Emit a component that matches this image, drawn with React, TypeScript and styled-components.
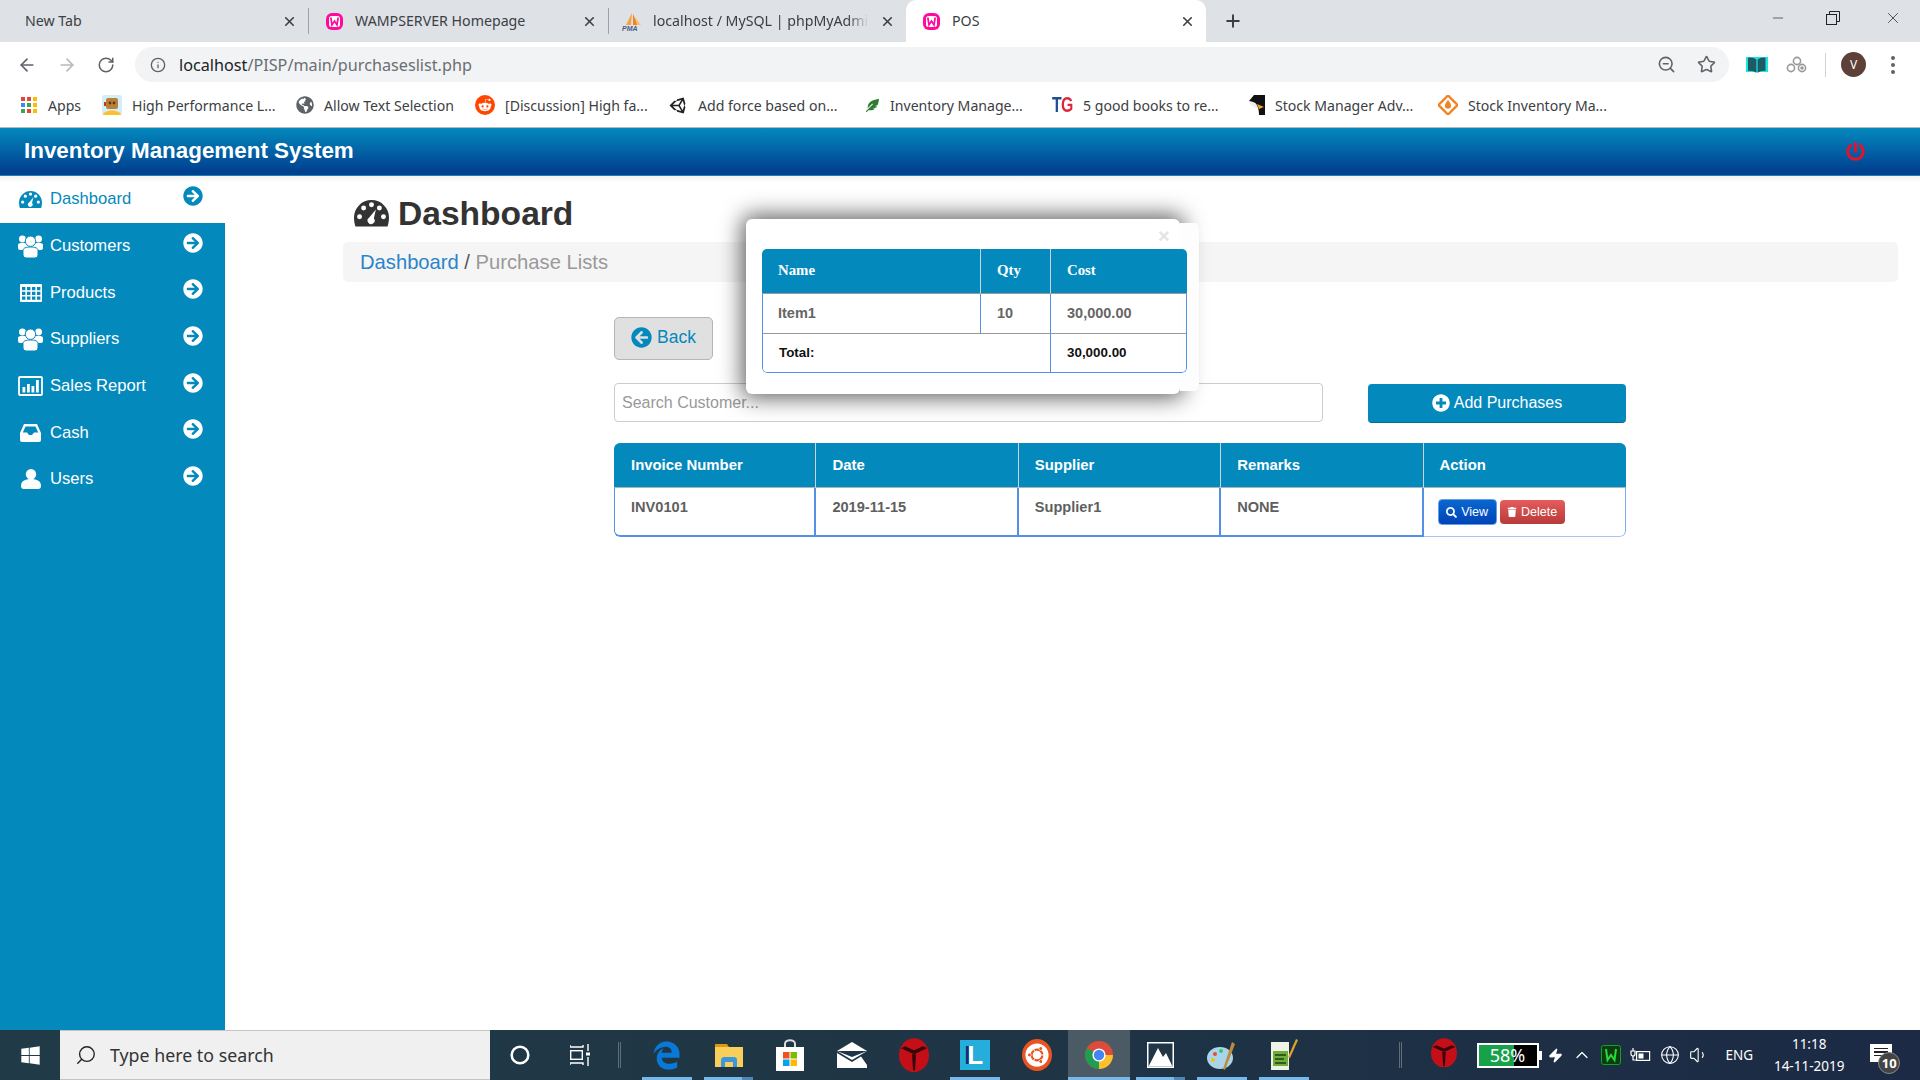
import React, { ReactElement, ReactNode } from 'react'
import styled, { createGlobalStyle } from 'styled-components'
import {
    FaArrowCircleRight, FaArrowCircleLeft, FaPlusCircle, FaSearch, FaTrash, FaPowerOff, FaWindows,
    FaEdgeLegacy, FaUbuntu, FaRedditAlien, FaUnity, FaGlobeAmericas, FaFeatherAlt
} from 'react-icons/fa'
import {
    ArrowLeft, ArrowRight, RotateCw, Info, ZoomOut, Star, X, Plus, Minus, Search,
    Circle, ChevronUp, Globe, Volume1, Zap
} from 'lucide-react'

const GlobalStyle = createGlobalStyle`
    html, body {
        margin: 0;
        padding: 0;
        background: #fff;
        font-family: "Liberation Sans", Arial, sans-serif;
    }
    * { box-sizing: border-box; }
`

const hole = (x : number, y : number, r : number) : string =>
    `M${x - r} ${y} a${r} ${r} 0 1 0 ${2 * r} 0 a${r} ${r} 0 1 0 ${-2 * r} 0 Z`

const DialIcon = ({ size } : { size : number }) : ReactElement => <svg width = { size } height = { size * .76 } viewBox = '0 0 24 18.2'>
    <path
        fill = 'currentColor'
        fillRule = 'evenodd'
        d = {
            'M12 0 A12 12 0 0 1 24 12 C24 14 23.6 16.4 23 18.2 H1 C.4 16.4 0 14 0 12 A12 12 0 0 1 12 0 Z '
            + hole(3.8, 11.5, 1.7) + hole(6.6, 5.4, 1.7) + hole(12, 3.2, 1.7) + hole(17.4, 5.4, 1.7) + hole(20.2, 11.5, 1.7)
            + 'M15 6.5 L13.6 12.6 A2.4 2.4 0 1 1 10.3 12.2 Z'
        }
    />
</svg>

const GroupIcon = () : ReactElement => <svg width = '25' height = '24' viewBox = '0 0 25 24' fill = 'currentColor'>
    <circle cx = '4.4' cy = '5' r = '3.4' />
    <circle cx = '20.6' cy = '5' r = '3.4' />
    <path d = 'M0 14 V11 C0 9.6 1.5 9 4 9 H21 C23.5 9 25 9.6 25 11 V14 Q25 16 23 16 H2 Q0 16 0 14 Z' />
    <circle cx = '12.5' cy = '7.2' r = '5.2' stroke = '#0489bd' strokeWidth = '1' />
    <path d = 'M5 21 V16.5 C5 14 8 13 12.5 13 C17 13 20 14 20 16.5 V21 Q20 24 17 24 H8 Q5 24 5 21 Z' stroke = '#0489bd' strokeWidth = '1' />
</svg>

const GridIcon = () : ReactElement => {
    const cells = [3, 7.8, 12.6].flatMap(y => [2, 7, 12, 17].map(x => `M${x} ${y} h3.4 v3.2 h-3.4 Z`)).join(' ')

    return <svg width = '22' height = '18' viewBox = '0 0 22 18'>
        <path fill = 'currentColor' fillRule = 'evenodd' d = { 'M1 0 H21 Q22 0 22 1 V17 Q22 18 21 18 H1 Q0 18 0 17 V1 Q0 0 1 0 Z ' + cells } />
    </svg>
}

const ChartIcon = () : ReactElement => <svg width = '25' height = '20' viewBox = '0 0 25 20'>
    <rect x = '1' y = '1' width = '23' height = '18' rx = '1' fill = 'none' stroke = 'currentColor' strokeWidth = '1.8' />
    <path d = 'M4.5 11 h2.8 v5.5 h-2.8 Z M9 8 h2.8 v8.5 h-2.8 Z M13.5 10 h2.8 v6.5 h-2.8 Z M18 4 h2.8 v12.5 h-2.8 Z' fill = 'currentColor' />
</svg>

const InboxIcon = () : ReactElement => <svg width = '21' height = '18' viewBox = '0 0 21 18'>
    <path
        fill = 'currentColor'
        fillRule = 'evenodd'
        d = 'M4 0 H17 L21 9 V16 Q21 18 19 18 H2 Q0 18 0 16 V9 Z M5.5 2.5 L2.8 8.5 H7 L9 11 H12 L14 8.5 H18.2 L15.5 2.5 Z'
    />
</svg>

const UserIcon = () : ReactElement => <svg width = '20' height = '20' viewBox = '0 0 20 20' fill = 'currentColor'>
    <circle cx = '10' cy = '5.2' r = '5.2' />
    <path d = 'M0 17 C0 12 4 10 10 10 C16 10 20 12 20 17 Q20 20 17 20 H3 Q0 20 0 17 Z' />
</svg>

const WampIcon = () : ReactElement => <svg width = '19' height = '19' viewBox = '0 0 19 19'>
    <rect x = '1' y = '1' width = '17' height = '17' rx = '6' fill = '#ff0a9c' />
    <rect x = '4' y = '4' width = '11' height = '11' rx = '2.5' fill = '#fff' />
    <path d = 'M5.8 5.5 L7 13 L9.5 9 L12 13 L13.2 5.5' fill = 'none' stroke = '#ff0a9c' strokeWidth = '1.7' />
</svg>

const PmaIcon = () : ReactElement => <svg width = '20' height = '19' viewBox = '0 0 20 19'>
    <path d = 'M10 1 L4 13 H9 Z' fill = '#f7a23b' />
    <path d = 'M11 2 L16 13 H11 Z' fill = '#f5821f' />
    <path d = 'M13 5 L19 13 H15 Z' fill = '#f9c06d' />
    <text x = '0' y = '18.5' fontSize = '7' fontWeight = '700' fontStyle = 'italic' fill = '#4a5a86' fontFamily = 'Liberation Sans'>PMA</text>
</svg>

const AppsIcon = () : ReactElement => <svg width = '16' height = '16' viewBox = '0 0 16 16'>
    {
        ['#ea4335', '#ea4335', '#fbbc05', '#4285f4', '#34a853', '#fbbc05', '#34a853', '#ea4335', '#fbbc05'].map((c, i) =>
            <rect key = { i } x = { (i % 3) * 6 } y = { Math.floor(i / 3) * 6 } width = '4' height = '4' fill = { c } />)
    }
</svg>

const RobotIcon = () : ReactElement => <svg width = '20' height = '20' viewBox = '0 0 20 20'>
    <rect width = '20' height = '20' rx = '2' fill = '#d4eef7' />
    <path d = 'M1 20 C2 14 18 14 19 20 Z' fill = '#fbc02d' />
    <rect x = '4' y = '3' width = '12' height = '11' rx = '2' fill = '#b9803a' />
    <circle cx = '8' cy = '8' r = '1.4' fill = '#6b3410' />
    <circle cx = '12' cy = '8' r = '1.4' fill = '#6b3410' />
    <rect x = '2' y = '7' width = '2' height = '4' fill = '#c0392b' />
</svg>

const RedditIcon = () : ReactElement => <RedditBadge><FaRedditAlien size = { 14 } color = '#fff' /></RedditBadge>

const TgIcon = () : ReactElement => <TgMark><span>T</span><TgRed>G</TgRed></TgMark>

const PenguinIcon = () : ReactElement => <svg width = '20' height = '20' viewBox = '0 0 20 20'>
    <rect width = '20' height = '20' fill = '#fff' />
    <path d = 'M9 0 H20 V20 H14 C14 12 12 8 4 6 Z' fill = '#111' />
    <path d = 'M4 7 C9 6 13 9 12 13 C9 13 6 11 4 7 Z' fill = '#eee' />
    <path d = 'M12 9 L19 12 L14 14 Z' fill = '#f5a623' />
</svg>

const DiamondIcon = () : ReactElement => <svg width = '20' height = '20' viewBox = '0 0 20 20'>
    <path d = 'M10 0.5 L19.5 10 L10 19.5 L0.5 10 Z' fill = 'none' stroke = '#f58220' strokeWidth = '2.4' />
    <path d = 'M10 4.5 C11 7 13.5 8.5 13 11.5 C12.5 14.5 7.5 14.5 7 11.5 C6.6 8.5 9 7 10 4.5 Z' fill = '#f58220' />
</svg>

const BookIcon = () : ReactElement => <svg width = '22' height = '18' viewBox = '0 0 22 18'>
    <path d = 'M0 1 H22 V16 H0 Z' fill = '#19e5e5' />
    <path d = 'M2 2 C5 1 8 2 10.4 3.5 V17 C8 15 5 14.5 2 15 Z M19.5 2 C17 1 14 2 11.6 3.5 V17 C14 15 17 14.5 19.5 15 Z' fill = '#1f5a64' />
</svg>

const GearsIcon = () : ReactElement => <svg width = '21' height = '18' viewBox = '0 0 21 18' fill = 'none' stroke = '#9a9a9a' strokeWidth = '1.6'>
    <circle cx = '11' cy = '5' r = '3.6' />
    <circle cx = '5' cy = '12' r = '3.6' />
    <circle cx = '16' cy = '12' r = '3.6' />
    <circle cx = '16' cy = '12' r = '1' fill = '#777' />
</svg>

const RestoreIcon = () : ReactElement => <svg width = '14' height = '14' viewBox = '0 0 14 14' fill = 'none' stroke = '#222' strokeWidth = '1'>
    <rect x = '0.5' y = '3.5' width = '10' height = '10' />
    <path d = 'M3.5 3.5 V0.5 H13.5 V10.5 H10.5' />
</svg>

const FolderIcon = () : ReactElement => <svg width = '28' height = '28' viewBox = '0 0 28 28'>
    <path d = 'M0 3 H12 L14 6 H0 Z' fill = '#d99a10' />
    <rect y = '6' width = '28' height = '20' fill = '#f8cf5b' />
    <path d = 'M6 26 V19 C6 17 8 16 9 16 H19 C21 16 22 17 22 19 V26 H18 V21 H10 V26 Z' fill = '#3b98dc' />
</svg>

const StoreIcon = () : ReactElement => <svg width = '28' height = '32' viewBox = '0 0 28 32'>
    <path d = 'M9 9 V5 C9 0 19 0 19 5 V9' fill = 'none' stroke = '#ddd' strokeWidth = '2' />
    <rect y = '8' width = '28' height = '24' fill = '#fff' />
    <rect x = '7' y = '13' width = '6.5' height = '6.5' fill = '#f25022' />
    <rect x = '14.5' y = '13' width = '6.5' height = '6.5' fill = '#7fba00' />
    <rect x = '7' y = '20.5' width = '6.5' height = '6.5' fill = '#00a4ef' />
    <rect x = '14.5' y = '20.5' width = '6.5' height = '6.5' fill = '#ffb900' />
</svg>

const MailIcon = () : ReactElement => <svg width = '30' height = '26' viewBox = '0 0 30 26'>
    <path d = 'M15 0 L30 9 L15 18 L0 9 Z' fill = '#fff' />
    <path d = 'M0 11 L15 20 L24 14.5 L30 23 V11 L30 26 H0 Z' fill = '#fff' />
    <path d = 'M0 9 H30 L15 15 Z' fill = '#203646' />
</svg>

const LenovoIcon = ({ size } : { size : number }) : ReactElement => <svg width = { size } height = { size * 1.15 } viewBox = '0 0 30 34'>
    <ellipse cx = '15' cy = '17' rx = '15' ry = '17' fill = '#c40f18' />
    <path d = 'M2 10 L15 16 L28 10 L24 8 L15 12 L6 8 Z M13 16 H17 L16 32 H14 Z' fill = '#3a0508' />
</svg>

const LIcon = () : ReactElement => <LTile>L</LTile>

const UbuntuIcon = () : ReactElement => <UbuntuBadge><FaUbuntu size = { 24 } color = '#fff' /></UbuntuBadge>

const ChromeIcon = () : ReactElement => <svg width = '28' height = '30' viewBox = '0 0 28 28'>
    <circle cx = '14' cy = '14' r = '14' fill = '#dd4b39' />
    <path d = 'M14 14 L2 7 A14 14 0 0 0 14 28 Z' fill = '#1e9e50' />
    <path d = 'M14 14 H28 A14 14 0 0 1 14 28 Z' fill = '#fbc02d' />
    <circle cx = '14' cy = '14' r = '6.6' fill = '#fff' />
    <circle cx = '14' cy = '14' r = '5.2' fill = '#4285f4' />
</svg>

const PhotosIcon = () : ReactElement => <svg width = '27' height = '26' viewBox = '0 0 27 26'>
    <rect width = '27' height = '26' fill = '#fff' />
    <rect x = '1.5' y = '1.5' width = '24' height = '23' fill = '#203646' />
    <path d = 'M1.5 24.5 L11 6 L16 15 L19 11 L25.5 24.5 Z' fill = '#fff' />
</svg>

const PaintIcon = () : ReactElement => <svg width = '30' height = '30' viewBox = '0 0 30 30'>
    <ellipse cx = '13' cy = '18' rx = '13' ry = '11' fill = '#a9d4ea' />
    <circle cx = '8' cy = '14' r = '2' fill = '#e74c3c' />
    <circle cx = '14' cy = '11' r = '2' fill = '#2ecc71' />
    <circle cx = '6' cy = '20' r = '2' fill = '#f1c40f' />
    <path d = 'M25 2 L28 4 L18 30 L16 29 Z' fill = '#c08a3e' />
</svg>

const NotepadIcon = () : ReactElement => <svg width = '28' height = '34' viewBox = '0 0 28 34'>
    <path d = 'M1 4 H19 V32 H1 Z' fill = '#eef3e6' />
    <rect x = '3' y = '13' width = '15' height = '15' fill = '#6fae3c' />
    <path d = 'M5 17 H16 M5 21 H14 M5 25 H16' stroke = '#20400e' strokeWidth = '1.4' />
    <path d = 'M26 1 L28 2 L20 20 L18 19 Z' fill = '#e0a526' />
</svg>

const WampTrayIcon = () : ReactElement => <svg width = '20' height = '20' viewBox = '0 0 20 20'>
    <rect x = '0.5' y = '0.5' width = '19' height = '19' rx = '2' fill = '#0c3d10' stroke = '#12a41f' />
    <path d = 'M5 4 L6.5 15 L10 10 L13.5 15 L15 4' fill = 'none' stroke = '#27d93b' strokeWidth = '2' />
</svg>

const TaskViewGlyph = () : ReactElement => <svg width = '20' height = '22' viewBox = '0 0 20 22' fill = 'none' stroke = '#fff' strokeWidth = '1.4'>
    <path d = 'M0 1 V3 H13 V1 M0 21 V19 H13 V21' />
    <rect x = '0.7' y = '6.7' width = '11.6' height = '8.6' />
    <path d = 'M18 0 V7 M18 13 V22' />
    <rect x = '16' y = '8.5' width = '4' height = '3' fill = '#fff' stroke = 'none' />
</svg>

const PlugBatteryIcon = () : ReactElement => <svg width = '21' height = '14' viewBox = '0 0 21 14' fill = 'none' stroke = '#fff' strokeWidth = '1.2'>
    <rect x = '6.6' y = '3.6' width = '13' height = '8.8' />
    <rect x = '8.5' y = '5.5' width = '5' height = '5' fill = '#fff' stroke = 'none' />
    <path d = 'M3 0 V3 M1 3 H5 V6 C5 8 3 8 3 8 C3 8 1 8 1 6 Z M3 8 V12 H6' />
</svg>

type BookmarkData = { width : number, slot : number, icon : ReactNode, label : string }

const bookmarks : BookmarkData[] = [
    { width: 81, slot: 18, icon: <AppsIcon />, label: 'Apps' },
    { width: 194, slot: 21, icon: <RobotIcon />, label: 'High Performance L...' },
    { width: 180, slot: 19, icon: <FaGlobeAmericas size = { 18 } color = '#5f6368' />, label: 'Allow Text Selection' },
    { width: 193, slot: 20, icon: <RedditIcon />, label: '[Discussion] High fa...' },
    { width: 196, slot: 20, icon: <FaUnity size = { 19 } color = '#222' />, label: 'Add force based on...' },
    { width: 188, slot: 16, icon: <FaFeatherAlt size = { 13 } color = '#2e7d32' />, label: 'Inventory Manage...' },
    { width: 193, slot: 21, icon: <TgIcon />, label: '5 good books to re...' },
    { width: 193, slot: 20, icon: <PenguinIcon />, label: 'Stock Manager Adv...' },
    { width: 190, slot: 20, icon: <DiamondIcon />, label: 'Stock Inventory Ma...' }
]

const menu = [
    { icon: <DialIcon size = { 23 } />, label: 'Dashboard', active: true },
    { icon: <GroupIcon />, label: 'Customers' },
    { icon: <GridIcon />, label: 'Products' },
    { icon: <GroupIcon />, label: 'Suppliers' },
    { icon: <ChartIcon />, label: 'Sales Report' },
    { icon: <InboxIcon />, label: 'Cash' },
    { icon: <UserIcon />, label: 'Users' }
]

const taskIcons : { icon : ReactNode, running? : boolean, split? : boolean, active? : boolean }[] = [
    { icon: <FaEdgeLegacy size = { 29 } color = '#0a78d7' />, running: true },
    { icon: <FolderIcon />, running: true, split: true },
    { icon: <StoreIcon /> },
    { icon: <MailIcon /> },
    { icon: <LenovoIcon size = { 30 } /> },
    { icon: <LIcon />, running: true },
    { icon: <UbuntuIcon /> },
    { icon: <ChromeIcon />, running: true, active: true },
    { icon: <PhotosIcon />, running: true, split: true },
    { icon: <PaintIcon />, running: true },
    { icon: <NotepadIcon />, running: true }
]

const App = () : ReactElement => {
    return <Page>
        <GlobalStyle />
        <TabStrip>
            <Tab $width = { 309 } $pad = { 25 } $line>
                <TabTitle>New Tab</TabTitle>
                <X size = { 15 } strokeWidth = { 2.6 } color = '#3c4043' />
            </Tab>
            <Tab $width = { 300 } $pad = { 16 } $line>
                <WampIcon />
                <TabTitle>WAMPSERVER Homepage</TabTitle>
                <X size = { 15 } strokeWidth = { 2.6 } color = '#3c4043' />
            </Tab>
            <Tab $width = { 297 } $pad = { 13 }>
                <PmaIcon />
                <TabTitle $fade>localhost / MySQL | phpMyAdmin</TabTitle>
                <X size = { 15 } strokeWidth = { 2.6 } color = '#3c4043' />
            </Tab>
            <Tab $width = { 300 } $pad = { 16 } $active>
                <WampIcon />
                <TabTitle>POS</TabTitle>
                <X size = { 15 } strokeWidth = { 2.6 } color = '#3c4043' />
            </Tab>
            <NewTab><Plus size = { 20 } strokeWidth = { 2.4 } color = '#3c4043' /></NewTab>
            <WindowControls>
                <Minus size = { 16 } strokeWidth = { 1 } color = '#222' />
                <RestoreIcon />
                <WindowClose size = { 18 } strokeWidth = { 1 } color = '#222' />
            </WindowControls>
        </TabStrip>
        <Toolbar>
            <NavIcons>
                <ArrowLeft size = { 20 } color = '#5f6368' />
                <ArrowRight size = { 20 } color = '#b5b8bb' />
                <RotateCw size = { 18 } color = '#5f6368' />
            </NavIcons>
            <Omnibox>
                <Info size = { 16 } color = '#5f6368' />
                <Url>localhost<UrlPath>/PISP/main/purchaseslist.php</UrlPath></Url>
                <OmniActions>
                    <ZoomOut size = { 19 } color = '#5f6368' />
                    <Star size = { 19 } color = '#5f6368' />
                </OmniActions>
            </Omnibox>
            <Extensions>
                <BookIcon />
                <GearsIcon />
                <ToolbarLine />
                <Avatar>V</Avatar>
                <Dots><i /><i /><i /></Dots>
            </Extensions>
        </Toolbar>
        <BookmarkBar>
            {
                bookmarks.map(b => <Bookmark key = { b.label } $width = { b.width }>
                    <BookmarkSlot $width = { b.slot }>{ b.icon }</BookmarkSlot>
                    { b.label }
                </Bookmark>)
            }
        </BookmarkBar>
        <Header>
            <HeaderTitle>Inventory Management System</HeaderTitle>
            <FaPowerOff size = { 19 } color = '#e8112d' />
        </Header>
        <Body>
            <Sidebar>
                {
                    menu.map(m => <MenuItem key = { m.label } $active = { m.active }>
                        <MenuIcon>{ m.icon }</MenuIcon>
                        <MenuLabel>{ m.label }</MenuLabel>
                        <MenuArrow><FaArrowCircleRight /></MenuArrow>
                    </MenuItem>)
                }
            </Sidebar>
            <Main>
                <PageTitle><DialIcon size = { 35 } /> Dashboard</PageTitle>
                <Breadcrumb>
                    <CrumbLink>Dashboard</CrumbLink>
                    <CrumbSep> / </CrumbSep>
                    Purchase Lists
                </Breadcrumb>
                <Content>
                    <BackButton><FaArrowCircleLeft size = { 21 } /> Back</BackButton>
                    <SearchRow>
                        <SearchInput placeholder = 'Search Customer...' />
                        <AddButton><FaPlusCircle size = { 18 } /> Add Purchases</AddButton>
                    </SearchRow>
                    <ListTable>
                        <thead>
                            <tr>
                                <Th>Invoice Number</Th>
                                <Th>Date</Th>
                                <Th>Supplier</Th>
                                <Th>Remarks</Th>
                                <Th>Action</Th>
                            </tr>
                        </thead>
                        <tbody>
                            <tr>
                                <Td>INV0101</Td>
                                <Td>2019-11-15</Td>
                                <Td>Supplier1</Td>
                                <Td>NONE</Td>
                                <ActionCell>
                                    <ActionRow>
                                        <ViewButton><FaSearch size = { 11 } /> View</ViewButton>
                                        <DeleteButton><FaTrash size = { 10 } /> Delete</DeleteButton>
                                    </ActionRow>
                                </ActionCell>
                            </tr>
                        </tbody>
                    </ListTable>
                </Content>
                <Modal>
                    <ModalEdge />
                    <ModalClose>×</ModalClose>
                    <ModalTable>
                        <colgroup>
                            <col width = '219' />
                            <col width = '70' />
                            <col width = '136' />
                        </colgroup>
                        <thead>
                            <tr>
                                <ModalTh>Name</ModalTh>
                                <ModalTh>Qty</ModalTh>
                                <ModalTh>Cost</ModalTh>
                            </tr>
                        </thead>
                        <tbody>
                            <tr>
                                <ModalTd>Item1</ModalTd>
                                <ModalTd>10</ModalTd>
                                <ModalTd>30,000.00</ModalTd>
                            </tr>
                            <tr>
                                <ModalTotal colSpan = { 2 }>Total:</ModalTotal>
                                <ModalTotal>30,000.00</ModalTotal>
                            </tr>
                        </tbody>
                    </ModalTable>
                </Modal>
            </Main>
        </Body>
        <Taskbar>
            <StartButton><FaWindows size = { 21 } color = '#fff' /></StartButton>
            <TaskSearch>
                <MirroredSearch><Search size = { 22 } strokeWidth = { 1.5 } color = '#222' /></MirroredSearch>
                Type here to search
            </TaskSearch>
            <TaskTool><Circle size = { 20 } strokeWidth = { 3 } color = '#fff' /></TaskTool>
            <TaskTool><TaskViewGlyph /></TaskTool>
            <TaskSeparator />
            <TaskIcons>
                {
                    taskIcons.map((t, i) => <TaskIcon key = { i } $running = { t.running } $active = { t.active } $split = { t.split }>
                        { t.icon }
                    </TaskIcon>)
                }
            </TaskIcons>
            <Tray>
                <TaskSeparator />
                <TrayLenovo><LenovoIcon size = { 26 } /></TrayLenovo>
                <Battery>58%</Battery>
                <Zap size = { 15 } color = '#fff' fill = '#fff' />
                <ChevronUp size = { 20 } strokeWidth = { 1.5 } color = '#fff' />
                <WampTrayIcon />
                <PlugBatteryIcon />
                <Globe size = { 20 } strokeWidth = { 1.3 } color = '#fff' />
                <Volume1 size = { 20 } strokeWidth = { 1.3 } color = '#fff' />
                <Lang>ENG</Lang>
                <Clock>
                    <span>11:18</span>
                    <span>14-11-2019</span>
                </Clock>
                <Notice>
                    <NoticeLines><i /><i /><i /></NoticeLines>
                    <NoticeBadge>10</NoticeBadge>
                </Notice>
            </Tray>
        </Taskbar>
    </Page>
}

const chromeFont = `"Noto Sans", "Open Sans", sans-serif`

const Page = styled.div`
    display: flex;
    flex-direction: column;
    width: 1920px;
    height: 1080px;
    overflow: hidden;
`

const TabStrip = styled.div`
    display: flex;
    align-items: stretch;
    flex: 0 0 42px;
    background: #dee1e6;
    font-family: ${chromeFont};
`

const Tab = styled.div<{ $width : number, $pad : number, $line? : boolean, $active? : boolean }>`
    display: flex;
    align-items: center;
    gap: 11px;
    width: ${p => p.$width}px;
    padding: 0 11px 0 ${p => p.$pad}px;
    background: ${p => p.$active ? '#fff' : 'transparent'};
    border-radius: ${p => p.$active ? '10px 10px 0 0' : '0'};
    border-right: ${p => p.$line ? '1px solid #9fa3a8' : '0'};
    height: ${p => p.$line ? '26px' : 'auto'};
    align-self: ${p => p.$line ? 'center' : 'stretch'};
`

const TabTitle = styled.span<{ $fade? : boolean }>`
    flex: 1;
    overflow: hidden;
    white-space: nowrap;
    margin-top: -2px;
    font-size: 14.2px;
    color: #3c4043;
    ${p => p.$fade ? `-webkit-mask-image: linear-gradient(to right, #000 90%, transparent);` : ''}
`

const NewTab = styled.div`
    display: flex;
    align-items: center;
    margin-left: 17px;
`

const WindowControls = styled.div`
    display: flex;
    align-items: center;
    gap: 40px;
    margin-left: auto;
    padding: 0 18px 6px 0;
`

const WindowClose = styled(X)`
    margin-left: 4px;
`

const Toolbar = styled.div`
    display: flex;
    align-items: center;
    flex: 0 0 45px;
    padding: 5px 0 5px 17px;
    background: #fff;
    font-family: ${chromeFont};
`

const NavIcons = styled.div`
    display: flex;
    align-items: center;
    gap: 20px;
    width: 118px;
`

const Omnibox = styled.div`
    display: flex;
    align-items: center;
    gap: 13px;
    width: 1594px;
    height: 35px;
    padding: 0 13px 0 15px;
    background: #f1f3f4;
    border-radius: 18px;
`

const Url = styled.span`
    flex: 1;
    font-size: 16.2px;
    color: #202124;
`

const UrlPath = styled.span`
    color: #6a6e73;
`

const OmniActions = styled.div`
    display: flex;
    align-items: center;
    gap: 21px;
`

const Extensions = styled.div`
    display: flex;
    align-items: center;
    gap: 18px;
    margin-left: 17px;
`

const ToolbarLine = styled.div`
    width: 1px;
    height: 24px;
    background: #d0d2d5;
`

const Avatar = styled.div`
    display: flex;
    align-items: center;
    justify-content: center;
    width: 25px;
    height: 25px;
    margin-left: -3px;
    border-radius: 50%;
    background: #5d4037;
    color: #fff;
    font-size: 12px;
`

const Dots = styled.div`
    display: flex;
    flex-direction: column;
    gap: 3px;
    margin-left: 7px;

    i {
        display: block;
        width: 4px;
        height: 4px;
        border-radius: 50%;
        background: #5f6368;
    }
`

const BookmarkBar = styled.div`
    display: flex;
    align-items: center;
    flex: 0 0 41px;
    padding: 0 0 4px 20px;
    background: #fff;
    border-bottom: 1px solid #b8b8b8;
    font-family: ${chromeFont};
`

const Bookmark = styled.div<{ $width : number }>`
    display: flex;
    align-items: center;
    gap: 10px;
    width: ${p => p.$width}px;
    font-size: 14.1px;
    color: #3c4043;
    white-space: nowrap;
`

const BookmarkSlot = styled.span<{ $width : number }>`
    display: flex;
    align-items: center;
    justify-content: center;
    width: ${p => p.$width}px;
`

const RedditBadge = styled.span`
    display: flex;
    align-items: center;
    justify-content: center;
    width: 20px;
    height: 20px;
    border-radius: 50%;
    background: #ff4500;
`

const TgMark = styled.span`
    display: inline-block;
    font-family: "Liberation Sans", sans-serif;
    font-weight: 700;
    font-size: 22px;
    letter-spacing: -1px;
    color: #1d4f91;
    transform: scaleX(.72);
`

const TgRed = styled.span`
    color: #e0263c;
`

const Header = styled.header`
    display: flex;
    align-items: center;
    justify-content: space-between;
    flex: 0 0 48px;
    padding: 0 55px 1px 24px;
    background: linear-gradient(#0489bd, #003a8c);
    border-bottom: 1px solid #0489bd;
`

const HeaderTitle = styled.h1`
    margin: 0;
    font-size: 22.4px;
    font-weight: 700;
    color: #fff;
`

const Body = styled.div`
    display: flex;
    flex: 1;
    min-height: 0;
`

const Sidebar = styled.nav`
    flex: 0 0 225px;
    background: #0489bd;
`

const MenuItem = styled.div<{ $active? : boolean }>`
    display: flex;
    align-items: center;
    height: 46.7px;
    padding: 0 22px 0 18px;
    background: ${p => p.$active ? 'linear-gradient(#f2f2f2, #fff 7px)' : 'transparent'};
    color: ${p => p.$active ? '#0489bd' : '#fff'};
`

const MenuIcon = styled.span`
    display: flex;
    justify-content: center;
    width: 25px;
`

const MenuLabel = styled.span`
    flex: 1;
    margin-left: 7px;
    font-size: 16.6px;
`

const MenuArrow = styled.span`
    display: flex;
    margin-bottom: 7px;
    font-size: 20px;
`

const Main = styled.main`
    position: relative;
    flex: 1;
    background: linear-gradient(#f2f2f2, #fff 7px);
`

const PageTitle = styled.h2`
    display: flex;
    align-items: center;
    gap: 9px;
    height: 66px;
    margin: 0;
    padding: 9px 0 0 129px;
    font-size: 33.6px;
    font-weight: 700;
    color: #333;
`

const Breadcrumb = styled.div`
    display: flex;
    align-items: center;
    white-space: pre;
    height: 40px;
    margin: 0 22px 0 118px;
    padding-left: 17px;
    background: #f5f5f5;
    border-radius: 5px;
    font-size: 20.2px;
    color: #999;
`

const CrumbLink = styled.span`
    color: #2a84c9;
`

const CrumbSep = styled.span`
    color: #555;
`

const Content = styled.div`
    width: 1012px;
    margin: 35px 0 0 389px;
`

const BackButton = styled.button`
    display: flex;
    align-items: center;
    gap: 5px;
    width: 99px;
    height: 43px;
    padding: 0 0 2px 16px;
    background: #e0e0e0;
    border: 1px solid #b5b5b5;
    border-radius: 5px;
    font: 17.5px "Liberation Sans", sans-serif;
    color: #0489bd;
`

const SearchRow = styled.div`
    display: flex;
    justify-content: space-between;
    align-items: flex-start;
    margin-top: 23px;
`

const SearchInput = styled.input`
    width: 709px;
    height: 39px;
    padding: 0 7px;
    border: 1px solid #ccc;
    border-radius: 4px;
    font: 16px "Liberation Sans", sans-serif;

    &::placeholder {
        color: #999;
    }
`

const AddButton = styled.button`
    display: flex;
    align-items: center;
    justify-content: center;
    gap: 4px;
    width: 258px;
    height: 39px;
    margin-top: 1px;
    background: #0489bd;
    border: 0;
    border-bottom: 1px solid #04708f;
    border-radius: 4px;
    font: 16px "Liberation Sans", sans-serif;
    color: #fff;
`

const ListTable = styled.table`
    width: 1012px;
    margin-top: 20px;
    table-layout: fixed;
    border-collapse: separate;
    border-spacing: 0;
    border-radius: 6px;
    overflow: hidden;
`

const Th = styled.th`
    height: 45px;
    padding: 0 0 0 16px;
    background: #0489bd;
    border-right: 1px solid #c8d4da;
    border-bottom: 1px solid #a9b4ba;
    text-align: left;
    font-size: 14.9px;
    font-weight: 700;
    color: #fff;

    &:first-child {
        padding-left: 17px;
    }

    &:last-child {
        border-right: 0;
    }
`

const Td = styled.td`
    height: 49px;
    padding: 11px 0 0 16px;
    vertical-align: top;
    background: #fff;
    border-right: 2px solid #5590e8;
    border-bottom: 2px solid #5590e8;
    font-size: 14.6px;
    font-weight: 700;
    color: #5f5f5f;

    &:first-child {
        border-left: 1px solid #5590e8;
        border-bottom-left-radius: 6px;
    }
`

const ActionCell = styled.td`
    padding: 11px 0 0 14px;
    vertical-align: top;
    border-right: 1px solid #7ea9ea;
    border-bottom: 1px solid #a8c4f0;
    border-bottom-right-radius: 6px;
`

const ActionRow = styled.div`
    display: flex;
    align-items: center;
    gap: 3px;
`

const ViewButton = styled.button`
    display: flex;
    align-items: center;
    justify-content: center;
    gap: 4px;
    width: 59px;
    height: 26px;
    padding: 0;
    background: linear-gradient(#0a67d0, #0043b8);
    border: 1px solid #639fe8;
    border-radius: 4px;
    font: 12.5px "Liberation Sans", sans-serif;
    color: #fff;
`

const DeleteButton = styled.button`
    display: flex;
    align-items: center;
    justify-content: center;
    gap: 4px;
    width: 65px;
    height: 24px;
    padding: 0;
    background: linear-gradient(#e65c5c, #b83a3a);
    border: 0;
    border-radius: 4px;
    font: 12.5px "Liberation Sans", sans-serif;
    color: #fff;
`

const Modal = styled.div`
    position: absolute;
    left: 521px;
    top: 43px;
    width: 434px;
    height: 175px;
    padding: 30px 0 0 16px;
    background: #fff;
    border-radius: 6px;
    box-shadow: 0 0 22px 4px rgba(0, 0, 0, .62);
`

const ModalEdge = styled.div`
    position: absolute;
    left: 434px;
    top: 4px;
    width: 19px;
    height: 168px;
    background: #fdfdfd;
    border-radius: 0 5px 5px 0;
`

const ModalClose = styled.span`
    position: absolute;
    left: 412px;
    top: 6px;
    font-size: 20px;
    font-weight: 700;
    color: #e4e4e4;
`

const ModalTable = styled.table`
    position: relative;
    width: 425px;
    table-layout: fixed;
    border-collapse: separate;
    border-spacing: 0;
    border-radius: 5px;
    overflow: hidden;
`

const ModalTh = styled.th`
    height: 44.5px;
    padding: 0 0 0 16px;
    background: #0489bd;
    border-right: 1px solid #c8d4da;
    border-bottom: 1px solid #999;
    text-align: left;
    font-family: "Liberation Serif", serif;
    font-size: 14.8px;
    font-weight: 700;
    color: #fff;

    &:last-child {
        border-right: 0;
    }
`

const ModalTd = styled.td`
    height: 40px;
    padding: 0 0 0 16px;
    border-right: 1.5px solid #5590e8;
    border-bottom: 1px solid #999;
    font-size: 14.5px;
    font-weight: 700;
    color: #666;

    &:first-child {
        border-left: 1px solid #5590e8;
        padding-left: 15px;
    }
`

const ModalTotal = styled.td`
    height: 39.5px;
    padding: 0 0 0 16px;
    border-right: 1.5px solid #5590e8;
    border-bottom: 1.5px solid #5590e8;
    font-size: 13.4px;
    font-weight: 700;
    color: #111;

    &:first-child {
        border-left: 1px solid #5590e8;
        border-bottom-left-radius: 5px;
    }

    &:last-child {
        border-bottom-right-radius: 5px;
    }
`

const Taskbar = styled.footer`
    display: flex;
    align-items: stretch;
    flex: 0 0 50px;
    background: linear-gradient(to right, #203b47, #1f3545 50%, #1c2a45);
    font-family: ${chromeFont};
`

const StartButton = styled.div`
    display: flex;
    align-items: center;
    justify-content: center;
    width: 60px;
`

const TaskSearch = styled.div`
    display: flex;
    align-items: center;
    gap: 13px;
    width: 430px;
    padding: 0 0 1px 15px;
    background: #f0f0f0;
    border-top: 1px solid #c4c4c4;
    border-bottom: 1px solid #c4c4c4;
    font-size: 17.8px;
    color: #333;
`

const MirroredSearch = styled.span`
    display: flex;
    transform: scaleX(-1);
`

const TaskTool = styled.div`
    display: flex;
    align-items: center;
    justify-content: center;
    width: 60px;
`

const TaskSeparator = styled.div`
    align-self: center;
    width: 3px;
    height: 26px;
    margin-left: 8px;
    border-left: 1px solid #5d6f7a;
    border-right: 1px solid #5d6f7a;
`

const TaskIcons = styled.div`
    display: flex;
    margin-left: 15px;
`

const TaskIcon = styled.div<{ $running? : boolean, $active? : boolean, $split? : boolean }>`
    position: relative;
    display: flex;
    align-items: center;
    justify-content: center;
    width: 61.7px;
    background: ${p => p.$active ? '#4b5b66' : 'transparent'};

    &::after {
        content: '';
        display: ${p => p.$running ? 'block' : 'none'};
        position: absolute;
        left: ${p => p.$active ? 0 : 6}px;
        right: ${p => p.$active ? 0 : 6}px;
        bottom: 0;
        height: 3px;
        background: ${p => p.$split
            ? 'linear-gradient(to right, #76b9ed 78%, #4f86b3 78%)'
            : '#76b9ed'};
    }
`

const UbuntuBadge = styled.span`
    display: flex;
    align-items: center;
    justify-content: center;
    width: 30px;
    height: 32px;
    border-radius: 50%;
    background: #e95420;
`

const LTile = styled.span`
    display: flex;
    align-items: center;
    justify-content: center;
    width: 30px;
    height: 30px;
    background: #25aedb;
    font: 700 26px "Liberation Sans", sans-serif;
    color: #fff;
    text-shadow: -3px 0 0 #12306e;
`

const Tray = styled.div`
    display: flex;
    align-items: center;
    margin-left: 76px;
    gap: 9px;
    color: #fff;
`

const TrayLenovo = styled.div`
    margin-left: 20px;
`

const Battery = styled.div`
    position: relative;
    display: flex;
    align-items: center;
    justify-content: center;
    width: 62px;
    height: 25px;
    margin-left: 11px;
    background: linear-gradient(to right, #17a24a 60%, #000 60%);
    border: 2px solid #fff;
    font-size: 18px;
    color: #fff;

    &::after {
        content: '';
        position: absolute;
        right: -5px;
        top: 6px;
        width: 3px;
        height: 9px;
        background: #fff;
    }
`

const Lang = styled.span`
    margin-left: 8px;
    font-size: 13.5px;
`

const Clock = styled.div`
    display: flex;
    flex-direction: column;
    align-items: center;
    gap: 4px;
    width: 78px;
    margin-left: 8px;
    font-size: 13.5px;
    line-height: 18px;
`

const Notice = styled.div`
    position: relative;
    width: 22px;
    height: 18px;
    margin: 0 0 5px 13px;
    background: #fff;
`

const NoticeLines = styled.div`
    display: flex;
    flex-direction: column;
    gap: 2px;
    padding: 4px 4px 0;

    i {
        display: block;
        height: 1.5px;
        background: #222;
    }
`

const NoticeBadge = styled.span`
    position: absolute;
    left: 8px;
    top: 8px;
    display: flex;
    align-items: center;
    justify-content: center;
    width: 22px;
    height: 22px;
    border-radius: 50%;
    background: #444;
    border: 1px solid #888;
    font-size: 13px;
    font-weight: 700;
    color: #fff;
`

export default App
